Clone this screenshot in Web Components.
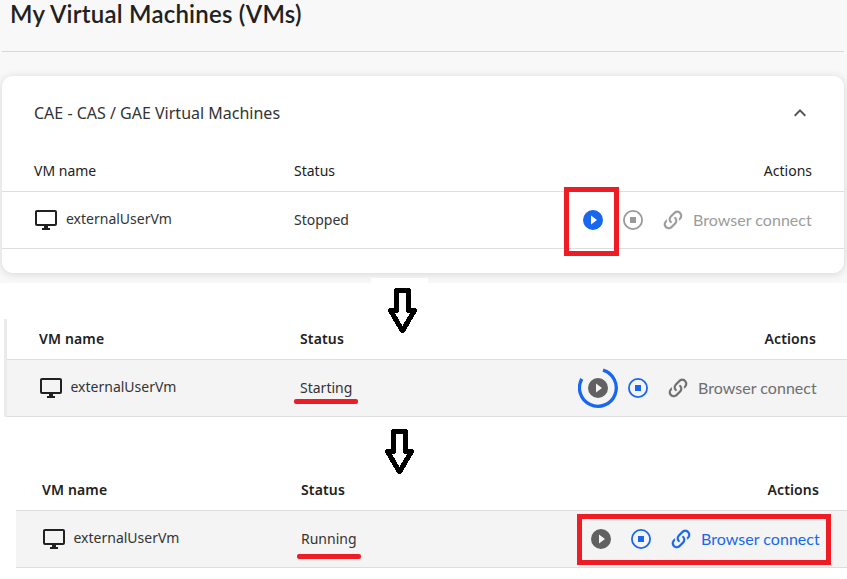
<!DOCTYPE html>
<html lang="en">
<head>
<meta charset="utf-8">
<title>My Virtual Machines</title>
<style>
html,body{margin:0;height:579px;overflow:hidden;background:#fff}
</style>
</head>
<body>
<vm-page></vm-page>
<script>
const ICONS={
monitor:'<path d="M21,16H3V4H21M21,2H3C1.89,2 1,2.89 1,4V16A2,2 0 0,0 3,18H10V20H8V22H16V20H14V18H21A2,2 0 0,0 23,16V4C23,2.89 22.1,2 21,2Z"/>',
play:'<path d="M10,16.5V7.5L16,12M12,2A10,10 0 0,0 2,12A10,10 0 0,0 12,22A10,10 0 0,0 22,12A10,10 0 0,0 12,2Z"/>',
stop:'<path d="M12,2A10,10 0 0,0 2,12A10,10 0 0,0 12,22A10,10 0 0,0 22,12A10,10 0 0,0 12,2M12,3.8A8.2,8.2 0 0,1 20.2,12A8.2,8.2 0 0,1 12,20.2A8.2,8.2 0 0,1 3.8,12A8.2,8.2 0 0,1 12,3.8M9,9V15H15V9"/>',
link:'<path stroke="currentColor" stroke-width=".2" d="M10.59,13.41C11,13.8 11,14.44 10.59,14.83C10.2,15.22 9.56,15.22 9.17,14.83C7.22,12.88 7.22,9.71 9.17,7.76V7.76L12.71,4.22C14.66,2.27 17.83,2.27 19.78,4.22C21.73,6.17 21.73,9.34 19.78,11.29L18.29,12.78C18.3,11.96 18.17,11.14 17.89,10.36L18.36,9.88C19.54,8.71 19.54,6.81 18.36,5.64C17.19,4.46 15.29,4.46 14.12,5.64L10.59,9.17C9.41,10.34 9.41,12.24 10.59,13.41M13.41,9.17C13.8,8.78 14.44,8.78 14.83,9.17C16.78,11.12 16.78,14.29 14.83,16.24V16.24L11.29,19.78C9.34,21.73 6.17,21.73 4.22,19.78C2.27,17.83 2.27,14.66 4.22,12.71L5.71,11.22C5.7,12.04 5.83,12.86 6.11,13.65L5.64,14.12C4.46,15.29 4.46,17.19 5.64,18.36C6.81,19.54 8.71,19.54 9.88,18.36L13.41,14.83C14.59,13.66 14.59,11.76 13.41,10.59C13,10.2 13,9.56 13.41,9.17Z"/>',
up:'<path d="M7.41,15.41L12,10.83L16.59,15.41L18,14L12,8L6,14L7.41,15.41Z"/>'
};
class El extends HTMLElement{
  constructor(){super();this.attachShadow({mode:'open'});}
  connectedCallback(){this.shadowRoot.innerHTML=this.render();}
}
customElements.define('vm-icon',class extends El{
  render(){return `<style>:host{display:block;width:24px;height:24px;flex:none}svg{display:block;fill:currentColor}</style>
  <svg width="24" height="24" viewBox="0 0 24 24" fill-rule="evenodd">${ICONS[this.getAttribute('name')]}</svg>`;}
});
customElements.define('vm-spinner',class extends El{
  render(){return `<style>:host{display:block;position:relative}svg{position:absolute;left:-8px;top:-8px}</style><slot></slot>
  <svg width="40" height="40" fill="none" stroke="#1967ee" stroke-width="3.3"><path d="M25,2.2A18.4,18.4 0 1 1 3.8,10.9"/></svg>`;}
});
customElements.define('vm-actions',class extends El{
  render(){const play='<vm-icon class="play" name="play"></vm-icon>';
  return `<style>:host{display:flex;align-items:center;gap:16px}
  .play{color:var(--play)}.stop{color:var(--stop)}
  .link{display:flex;align-items:center;gap:8px;color:var(--link);font:400 16px/24px Lato,sans-serif;letter-spacing:.03px}
  .link span{width:119px;white-space:nowrap}</style>
  ${this.hasAttribute('busy')?`<vm-spinner>${play}</vm-spinner>`:play}
  <vm-icon class="stop" name="stop"></vm-icon>
  <span class="link"><vm-icon name="link"></vm-icon><span>Browser connect</span></span>`;}
});
customElements.define('vm-table',class extends El{
  render(){return `<style>
  :host{display:block;font:14px/20px "Noto Sans",sans-serif;color:#212121}
  .r{display:grid;grid-template-columns:var(--status) 1fr auto;align-items:center;box-sizing:border-box;padding:0 var(--pr) 0 var(--pl);border-bottom:1px solid #dedede}
  .h{height:41px;font-weight:var(--hw,400);letter-spacing:var(--hls,0)}
  .h span:last-child{padding-right:var(--hpr,0)}
  .b{height:57px;background:var(--rowbg,transparent);color:#333}
  .n{display:flex;align-items:center;gap:8px}.n vm-icon{color:#212121}.n span{padding-bottom:2px;margin-left:var(--nx,0)}
  </style>
  <div class="r h"><span>VM name</span><span>Status</span><span>Actions</span></div>
  <div class="r b"><div class="n"><vm-icon name="monitor"></vm-icon><span>externalUserVm</span></div><slot name="status"></slot><slot name="actions"></slot></div>`;}
});
customElements.define('vm-card',class extends El{
  render(){return `<style>
  :host{display:block;box-sizing:border-box;height:197px;margin:24px 3px 0 2px;background:#fff;border-radius:11px;box-shadow:0 1px 8px rgba(0,0,0,.14)}
  header{display:flex;align-items:center;justify-content:space-between;box-sizing:border-box;height:75px;padding:0 32px 2px;font:16px/24px "Noto Sans",sans-serif;color:#333}
  vm-icon{color:#555}</style>
  <header><slot name="title"></slot><vm-icon name="up"></vm-icon></header><slot></slot>`;}
});
customElements.define('down-arrow',class extends El{
  render(){return `<style>:host{display:block;position:absolute}svg{display:block}</style>
  <svg width="29" height="46" shape-rendering="crispEdges" fill="#fff" stroke="#000" stroke-width="5" stroke-linejoin="round"><path d="M8.5,2.5H20.5V22.5H26.5L14.5,42.8L2.5,22.5H8.5Z"/></svg>`;}
});
customElements.define('mark-box',class extends El{
  render(){return `<style>:host{display:block;position:absolute;box-sizing:border-box;border:5px solid #ee1c25}</style>`;}
});
customElements.define('mark-line',class extends El{
  render(){return `<style>:host{display:block;position:absolute;width:64px;height:5px;border-radius:2px;background:#ee1c25}</style>`;}
});
customElements.define('vm-page',class extends El{
  render(){return `<style>
  :host{display:flex;flex-direction:column;position:relative;width:847px;height:579px;background:#fff}
  .top{height:283px;background:#f8f8f8;overflow:hidden;flex:none}
  h1{box-sizing:border-box;height:51px;margin:0;padding:0 0 0 10px;font:600 24px/27px Lato,sans-serif;letter-spacing:.22px;color:#212121}
  hr{margin:0 3px 0 2px;border:0;height:1px;background:#d8d8d8}
  .t1{--status:260px;--pl:32px;--pr:32px;--play:#1967ee;--stop:#999;--link:#9c9c9c}
  .t2,.t3{--hw:600;--hls:.15px;--hpr:1px;--nx:-.5px;--rowbg:#f4f4f4;--stop:#1967ee;--play:#616161}
  .t2{--status:261px;--pl:32px;--pr:30px;--link:#6e6e6e;margin-top:36px;border-left:3px solid #ebebeb;margin-left:4px}
  .t3{--status:259px;--pl:26px;--pr:27px;--link:#1967ee;margin:53px 0 0 16px}
  .patch{position:absolute;left:371px;top:278px;width:57px;height:5px;background:#fff}
  </style>
  <section class="top"><h1>My Virtual Machines (VMs)</h1><hr>
  <vm-card><span slot="title">CAE - CAS / GAE Virtual Machines</span>
  <vm-table class="t1"><span slot="status">Stopped</span><vm-actions slot="actions"></vm-actions></vm-table></vm-card></section>
  <vm-table class="t2"><span slot="status">Starting</span><vm-actions slot="actions" busy></vm-actions></vm-table>
  <vm-table class="t3"><span slot="status">Running</span><vm-actions slot="actions"></vm-actions></vm-table>
  <div class="patch"></div>
  <down-arrow style="left:388px;top:288px"></down-arrow>
  <down-arrow style="left:385px;top:429px"></down-arrow>
  <mark-box style="left:564px;top:187px;width:55px;height:69px"></mark-box>
  <mark-box style="left:577px;top:514px;width:254px;height:51px"></mark-box>
  <mark-line style="left:294px;top:399px"></mark-line>
  <mark-line style="left:297px;top:554px"></mark-line>`;}
});
</script>
</body>
</html>
